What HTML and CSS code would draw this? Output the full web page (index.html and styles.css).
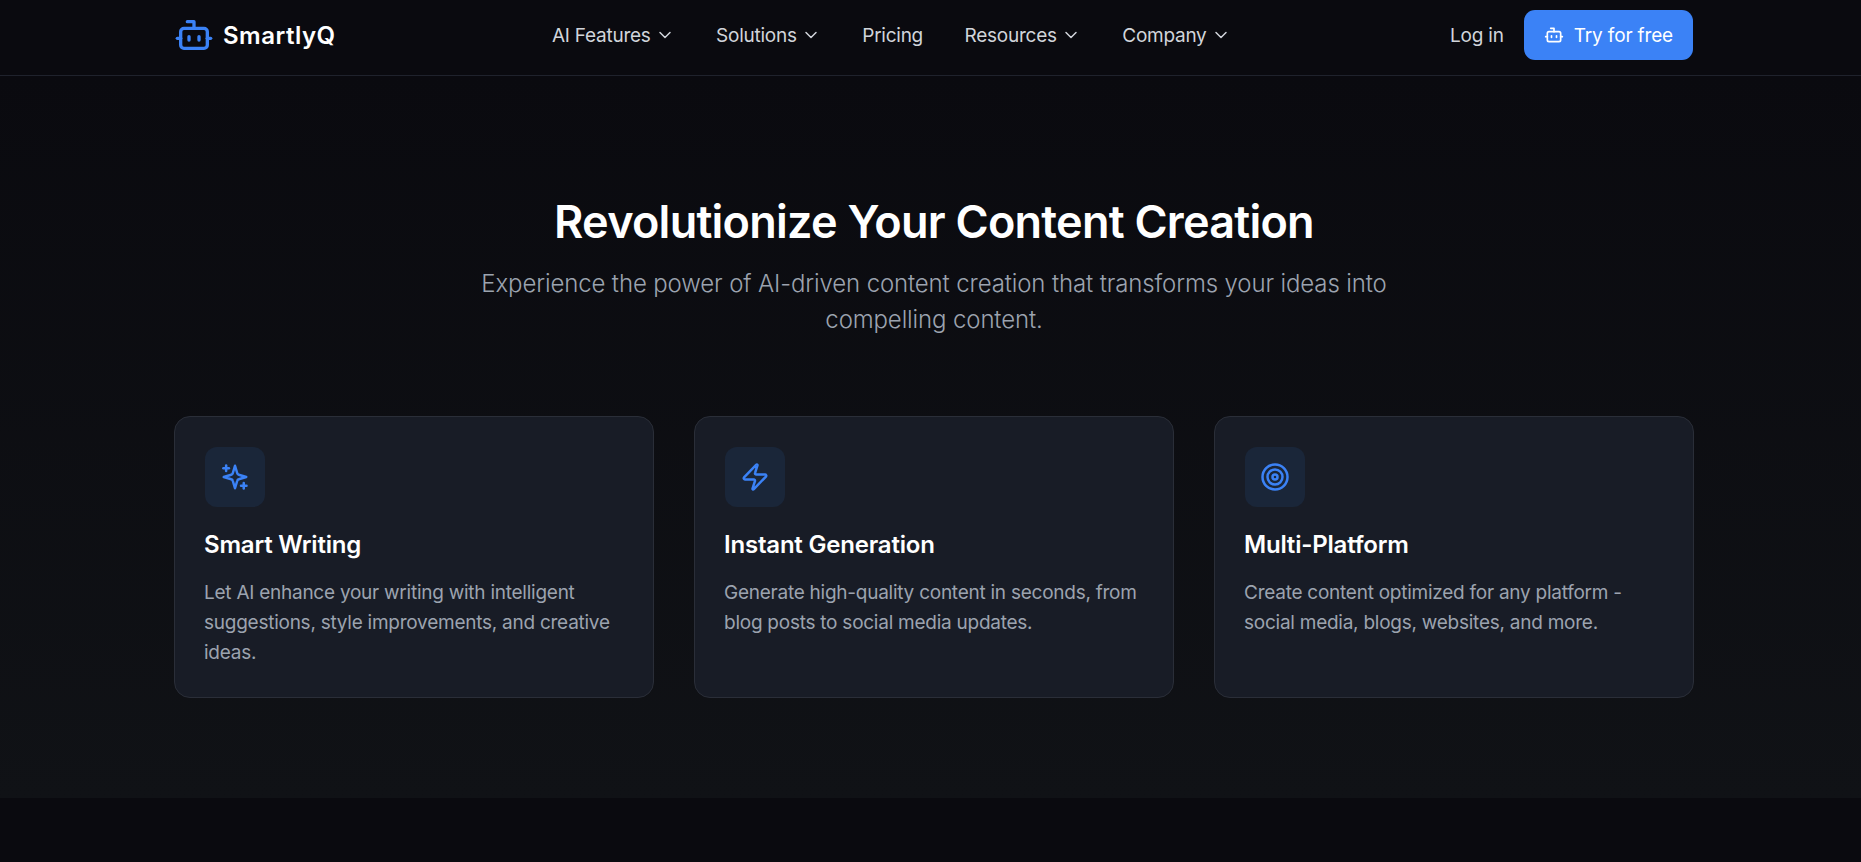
FILE: index.html
```html
<!doctype html>
<html>
<head>
<meta charset="utf-8">
<title>SmartlyQ</title>
<link rel="stylesheet" href="styles.css">
</head>

<body>
<header class="topbar">
    <div class="topbar-in">
        <a class="logo" href="#">
            <svg class="logo-icon" viewBox="0 0 24 24" fill="none" stroke="currentColor" stroke-width="2" stroke-linecap="round" stroke-linejoin="round">
                <path d="M12 8V4H8"/>
                <rect x="4" y="8" width="16" height="12" rx="2"/>
                <path d="M2 14h2"/>
                <path d="M20 14h2"/>
                <path d="M15 13v2"/>
                <path d="M9 13v2"/>
            </svg>
            <span>SmartlyQ</span>
        </a>
        <nav class="nav">
            <a href="#">AI Features <svg class="chev" viewBox="0 0 24 24"><path d="m6 9 6 6 6-6"/></svg></a>
            <a href="#">Solutions <svg class="chev" viewBox="0 0 24 24"><path d="m6 9 6 6 6-6"/></svg></a>
            <a href="#">Pricing</a>
            <a href="#">Resources <svg class="chev" viewBox="0 0 24 24"><path d="m6 9 6 6 6-6"/></svg></a>
            <a href="#">Company <svg class="chev" viewBox="0 0 24 24"><path d="m6 9 6 6 6-6"/></svg></a>
        </nav>
        <div class="actions">
            <a class="login" href="#">Log in</a>
            <a class="try" href="#">
                <svg class="try-icon" viewBox="0 0 24 24" fill="none" stroke="currentColor" stroke-width="2" stroke-linecap="round" stroke-linejoin="round">
                    <path d="M12 8V4H8"/>
                    <rect x="4" y="8" width="16" height="12" rx="2"/>
                    <path d="M2 14h2"/>
                    <path d="M20 14h2"/>
                    <path d="M15 13v2"/>
                    <path d="M9 13v2"/>
                </svg>
                Try for free
            </a>
        </div>
    </div>
</header>

<section class="hero">
    <div class="hero-in">
        <h1 class="title">Revolutionize Your Content Creation</h1>
        <p class="sub">Experience the power of AI-driven content creation that transforms your ideas into compelling content.</p>
        <div class="cards">
            <div class="card">
                <div class="card-icon">
                    <svg viewBox="0 0 24 24"><path d="M12 3l1.8 6a1.6 1.6 0 0 0 1.2 1.2l6 1.8-6 1.8a1.6 1.6 0 0 0-1.2 1.2L12 21l-1.8-6A1.6 1.6 0 0 0 9 13.8L3 12l6-1.8a1.6 1.6 0 0 0 1.2-1.2z"/><path d="M4.9 2.7v4.4"/><path d="M2.7 4.9h4.4"/><path d="M19 16.8v4.4"/><path d="M16.8 19h4.4"/></svg>
                </div>
                <h3>Smart Writing</h3>
                <p>Let AI enhance your writing with intelligent suggestions, style improvements, and creative ideas.</p>
            </div>
            <div class="card">
                <div class="card-icon">
                    <svg viewBox="0 0 24 24"><path d="M4 14a1 1 0 0 1-.78-1.63l9.9-10.2a.5.5 0 0 1 .86.46l-1.92 6.02A1 1 0 0 0 13 10h7a1 1 0 0 1 .78 1.63l-9.9 10.2a.5.5 0 0 1-.86-.46l1.92-6.02A1 1 0 0 0 11 14z"/></svg>
                </div>
                <h3>Instant Generation</h3>
                <p>Generate high-quality content in seconds, from blog posts to social media updates.</p>
            </div>
            <div class="card">
                <div class="card-icon">
                    <svg viewBox="0 0 24 24"><circle cx="12" cy="12" r="10"/><circle cx="12" cy="12" r="6"/><circle cx="12" cy="12" r="2"/></svg>
                </div>
                <h3>Multi-Platform</h3>
                <p>Create content optimized for any platform - social media, blogs, websites, and more.</p>
            </div>
        </div>
    </div>
</section>
</body>
</html>
```

FILE: styles.css
```css
* { box-sizing: border-box; }
html, body { margin: 0; height: 100%; }
body { font-family: "Inter", "Noto Sans", Arial, sans-serif; color: #fff; background: #0a0a0f; overflow: hidden; }
a { color: inherit; text-decoration: none; }

.topbar { height: 76px; border-bottom: 1px solid #1f222c; }
.topbar-in { width: 1520px; height: 75px; margin-left: 174px; padding-bottom: 5px; display: flex; align-items: center; }
.logo { flex: 0 0 378px; display: flex; align-items: center; gap: 9px; font-size: 24px; font-weight: 600; letter-spacing: 0.5px; }
.logo-icon { width: 40px; height: 40px; color: #3b82f6; }
.nav { display: flex; gap: 41.5px; font-size: 19px; color: #d1d5db; }
.nav a { display: flex; align-items: center; gap: 4px; letter-spacing: -0.25px; }
.chev { width: 20px; height: 20px; fill: none; stroke: currentColor; stroke-width: 1.8; stroke-linecap: round; stroke-linejoin: round; }
.actions { margin-left: auto; margin-right: 1px; display: flex; align-items: center; gap: 20px; }
.login { font-size: 19px; color: #d1d5db; letter-spacing: -0.2px; }
.try { display: flex; align-items: center; gap: 10px; height: 50px; padding: 0 20px; font-size: 19px; letter-spacing: -0.15px; background: #3b82f6; border-radius: 11px; }
.try-icon { width: 20px; height: 20px; }

.hero { height: 722px; padding-top: 121px; background: linear-gradient(#0a0a0f, #101216); }
.hero-in { width: 1520px; margin-left: 174px; }
.title { margin: 0; text-align: center; font-size: 45px; line-height: 50px; font-weight: 600; letter-spacing: -0.75px; }
.sub { width: 960px; margin: 19px auto 0; text-align: center; font-size: 24px; line-height: 36px; font-weight: 300; color: #9ca3af; letter-spacing: -0.13px; }
.cards { margin-top: 78px; display: grid; grid-template-columns: repeat(3, 1fr); gap: 40px; }
.card { height: 282px; padding: 30px; background: #181c26; border: 1px solid #2a2e38; border-radius: 16px; }
.card-icon { width: 60px; height: 60px; display: flex; align-items: center; justify-content: center; background: #1a2639; border-radius: 12px; }
.card-icon svg { width: 30px; height: 30px; fill: none; stroke: #3b82f6; stroke-width: 2; stroke-linecap: round; stroke-linejoin: round; }
.card h3 { margin: 22px 0 0 -1px; font-size: 24px; line-height: 32px; font-weight: 600; letter-spacing: -0.2px; }
.card p { margin: 17px 0 0 -1px; font-size: 19px; line-height: 30px; color: #9ca3af; letter-spacing: -0.25px; }
```
